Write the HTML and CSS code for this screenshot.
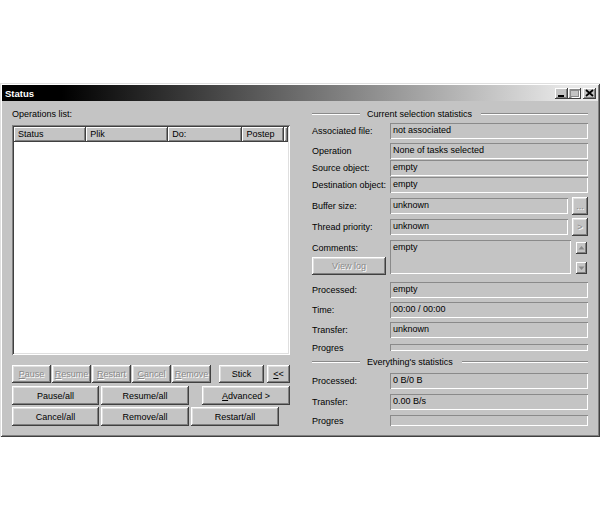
FILE: index.html
```html
<!DOCTYPE html>
<html>
<head>
<meta charset="utf-8">
<link rel="stylesheet" href="styles.css">
</head>
<body>
<div class="window">
  <div class="titlebar">
    <span class="title">Status</span>
    <div class="tb-btns">
      <span class="tb-btn"><svg width="13" height="11" viewBox="0 0 13 11"><rect x="3" y="7" width="6" height="2" fill="#000"/></svg></span>
      <span class="tb-btn"><svg width="13" height="11" viewBox="0 0 13 11"><rect x="2.5" y="1.5" width="8" height="7" fill="none" stroke="#8a8a8a"/><rect x="2" y="1" width="9" height="2" fill="#8a8a8a"/><path d="M11.5 2.5v7h-8" fill="none" stroke="#fff"/></svg></span>
      <span class="tb-btn close"><svg width="13" height="11" viewBox="0 0 13 11"><path d="M3 2l7 6M10 2l-7 6" stroke="#000" stroke-width="1.7"/></svg></span>
    </div>
  </div>
  <div class="content">
    <div class="left">
      <div class="caption">Operations list:</div>
      <div class="listbox">
        <div class="list-header">
          <div class="col c1">Status</div>
          <div class="col c2">Plik</div>
          <div class="col c3">Do:</div>
          <div class="col c4">Postep</div>
          <div class="col c5"></div>
        </div>
      </div>
      <div class="btn-row row-a">
        <button class="btn dis small"><u>P</u>ause</button>
        <button class="btn dis small"><u>R</u>esume</button>
        <button class="btn dis small"><u>R</u>estart</button>
        <button class="btn dis small"><u>C</u>ancel</button>
        <button class="btn dis small"><u>R</u>emove</button>
        <button class="btn stick">Stick</button>
        <button class="btn back"><u>&lt;</u>&lt;</button>
      </div>
      <div class="btn-row row-b">
        <button class="btn w87">Pause/all</button>
        <button class="btn w88">Resume/all</button>
        <button class="btn w88 push"><u>A</u>dvanced &gt;</button>
      </div>
      <div class="btn-row row-c">
        <button class="btn w87">Cancel/all</button>
        <button class="btn w88">Remove/all</button>
        <button class="btn w88">Restart/all</button>
      </div>
    </div>

    <div class="right">
      <div class="group-hdr"><span class="gline short"></span><span class="gtext">Current selection statistics</span><span class="gline"></span></div>
      <div class="row g3"><span class="lbl">Associated file:</span><div class="field">not associated</div></div>
      <div class="row g4"><span class="lbl">Operation</span><div class="field">None of tasks selected</div></div>
      <div class="row g1"><span class="lbl">Source object:</span><div class="field">empty</div></div>
      <div class="row g1"><span class="lbl">Destination object:</span><div class="field">empty</div></div>
      <div class="row tall g4"><span class="lbl">Buffer size:</span><div class="field">unknown</div><button class="btn dis side">...</button></div>
      <div class="row tall g3"><span class="lbl">Thread priority:</span><div class="field">unknown</div><button class="btn dis side">&gt;</button></div>
      <div class="row comments g4">
        <div class="lbl-col">
          <span class="lbl">Comments:</span>
          <button class="btn dis viewlog">View log</button>
        </div>
        <div class="field memo">empty</div>
        <div class="scroll">
          <span class="sbtn"><svg width="11" height="12" viewBox="0 0 11 12"><path d="M5.5 4L8.5 7.5H2.5Z" fill="#8a8a8a"/></svg></span>
          <span class="sbtn"><svg width="11" height="12" viewBox="0 0 11 12"><path d="M5.5 8L8.5 4.5H2.5Z" fill="#8a8a8a"/></svg></span>
        </div>
      </div>
      <div class="row g8"><span class="lbl">Processed:</span><div class="field">empty</div></div>
      <div class="row g4"><span class="lbl">Time:</span><div class="field">00:00 / 00:00</div></div>
      <div class="row g4"><span class="lbl">Transfer:</span><div class="field">unknown</div></div>
      <div class="row bar g6"><span class="lbl">Progres</span><div class="field progress"></div></div>
      <div class="group-hdr g5"><span class="gline short"></span><span class="gtext">Everything's statistics</span><span class="gline"></span></div>
      <div class="row g5"><span class="lbl">Processed:</span><div class="field">0 B/0 B</div></div>
      <div class="row g5"><span class="lbl">Transfer:</span><div class="field">0.00 B/s</div></div>
      <div class="row bar2 g5"><span class="lbl">Progres</span><div class="field progress"></div></div>
    </div>
  </div>
</div>
</body>
</html>
```

FILE: styles.css
```css
* { box-sizing: border-box; }
html, body { margin: 0; background: #fff; }
body {
  font-family: "Liberation Sans", Arial, sans-serif;
  font-size: 9px;
  color: #000;
}
.window {
  width: 600px;
  height: 354px;
  margin-top: 83px;
  background: #c4c4c4;
  padding: 2px;
  box-shadow: inset 1px 1px #dfdfdf, inset -1px -1px #404040, inset 2px 2px #fff, inset -2px -2px #808080;
  display: flex;
  flex-direction: column;
}
.titlebar {
  height: 16px;
  flex: none;
  background: linear-gradient(to right, #000 10%, #e8e8e8 95%);
  display: flex;
  align-items: center;
  justify-content: space-between;
  padding: 0 2px 0 3px;
}
.title { color: #fff; font-weight: bold; font-size: 9.5px; }
.tb-btns { display: flex; }
.tb-btn {
  width: 13px; height: 11px;
  background: #c4c4c4;
  box-shadow: inset -1px -1px #404040, inset 1px 1px #fff, inset -2px -2px #808080;
  display: block;
}
.tb-btn svg { display: block; }
.tb-btn.close { margin-left: 2px; }

.content { flex: 1; display: flex; gap: 22px; padding: 7px 0 0 10px; }
.left { width: 278px; display: flex; flex-direction: column; }
.caption { height: 12px; line-height: 12px; }
.listbox {
  margin-top: 5px;
  height: 230px;
  background: #fff;
  padding: 2px;
  box-shadow: inset 1px 1px #808080, inset -1px -1px #fff, inset 2px 2px #404040, inset -2px -2px #dfdfdf;
}
.list-header { display: flex; height: 15px; }
.col {
  height: 15px; line-height: 15px; padding-left: 4px;
  background: #c4c4c4;
  box-shadow: inset -1px -1px #404040, inset 1px 1px #fff, inset -2px -2px #808080;
}
.c1 { width: 73px; }
.c2 { width: 83px; }
.c3 { width: 75px; }
.c4 { width: 42px; }
.c5 { flex: 1; }

.btn {
  border: 0; margin: 0; padding: 0;
  font: inherit; color: #000;
  background: #c4c4c4;
  height: 100%;
  box-shadow: inset -1px -1px #404040, inset 1px 1px #fff, inset -2px -2px #808080, inset 2px 2px #dfdfdf;
  display: flex; align-items: center; justify-content: center;
  white-space: nowrap;
}
.btn.dis { color: #8a8a8a; text-shadow: 1px 1px #fff; }
.btn-row { display: flex; flex: none; }
.row-a { margin-top: 10px; height: 18px; gap: 1px; }
.row-b { margin-top: 3px; height: 19px; gap: 2px; }
.row-c { margin-top: 2px; height: 19px; gap: 2px; }
.small { width: 39px; }
.stick { width: 45px; margin-left: 7px; }
.back { width: 23px; margin-left: 2px; }
.w87 { width: 87px; }
.w88 { width: 88px; }
.push { margin-left: auto; }

.right { width: 276px; display: flex; flex-direction: column; }
.group-hdr { height: 12px; display: flex; align-items: center; flex: none; }
.gline { height: 2px; border-top: 1px solid #8a8a8a; border-bottom: 1px solid #fff; flex: 1; }
.gline.short { flex: none; width: 48px; }
.gtext { margin: 0 9px 0 7px; }
.row { display: flex; align-items: center; height: 16px; flex: none; }
.lbl { width: 78px; flex: none; white-space: nowrap; }
.field {
  flex: 1; height: 16px;
  padding: 1px 3px 0;
  line-height: 13px;
  box-shadow: inset 1px 1px #8a8a8a, inset -1px -1px #fff;
  white-space: nowrap;
}
.row.tall { height: 18px; }
.side { width: 16px; margin-left: 4px; flex: none; }
.comments { height: 34px; align-items: stretch; }
.lbl-col { width: 78px; display: flex; flex-direction: column; justify-content: space-between; }
.lbl-col .lbl { padding-top: 3px; line-height: 10px; }
.viewlog { width: 74px; height: 18px; margin-bottom: -1px; }
.memo { flex: none; width: 181px; height: 34px; }
.scroll { margin-left: 5px; width: 11px; display: flex; flex-direction: column; justify-content: space-between; padding: 2px 0 0; }
.sbtn {
  display: block; width: 11px; height: 12px;
  box-shadow: inset -1px -1px #404040, inset 1px 1px #fff, inset -2px -2px #808080;
}
.sbtn svg { display: block; }
.row.bar { height: 7px; }
.row.bar .progress { height: 7px; }
.row.bar2 { height: 11px; }
.row.bar2 .progress { height: 11px; }

.g1 { margin-top: 1px; }
.g3 { margin-top: 3px; }
.g4 { margin-top: 4px; }
.g5 { margin-top: 5px; }
.g6 { margin-top: 6px; }
.g8 { margin-top: 8px; }
```
